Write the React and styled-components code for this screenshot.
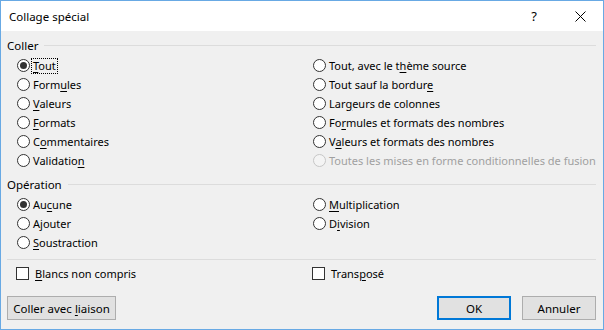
import React from 'react'
import styled, { createGlobalStyle } from 'styled-components'

const Global = createGlobalStyle`
  html, body { margin: 0; padding: 0; background: #f0f0f0; }
  * { box-sizing: border-box; }
`

const Window = styled.div`
  width: 604px;
  height: 330px;
  border: 1px solid #68a9e4;
  background: #f0f0f0;
  font-family: "Noto Sans", "Segoe UI", sans-serif;
  font-size: 11px;
  color: #000;
  display: flex;
  flex-direction: column;
`

const TitleBar = styled.div`
  height: 30px;
  background: #fff;
  display: flex;
  align-items: center;
  padding-left: 8px;
  flex-shrink: 0;
`

const Title = styled.div`
  flex: 1;
  font-size: 11.5px;
`

const TitleButton = styled.div`
  width: 46px;
  height: 30px;
  display: flex;
  align-items: center;
  justify-content: center;
  font-size: 13px;
  color: #000;
`

const Body = styled.div`
  flex: 1;
  padding: 6px 7px 0 6px;
  display: flex;
  flex-direction: column;
`

const SectionHeader = styled.div`
  height: 16px;
  display: flex;
  align-items: center;
  gap: 6px;
  margin-bottom: 3px;
  font-size: 11.5px;
  &::after {
    content: '';
    flex: 1;
    height: 1px;
    background: #dcdcdc;
  }
`

const Grid = styled.div`
  display: grid;
  grid-template-columns: 296px 1fr;
  grid-auto-flow: column;
  grid-template-rows: repeat(${p => p.$rows}, 19px);
  padding-left: 10px;
  margin-bottom: ${p => p.$mb || 0}px;
`

const Option = styled.label`
  display: flex;
  align-items: center;
  gap: 2px;
  color: ${p => (p.$disabled ? '#a0a0a0' : '#000')};
  white-space: nowrap;
`

const RadioCircle = styled.span`
  width: 13px;
  height: 13px;
  border-radius: 50%;
  border: 1px solid ${p => (p.$disabled ? '#c6c6c6' : '#333')};
  background: ${p => (p.$disabled ? '#f4f4f4' : '#fff')};
  display: flex;
  align-items: center;
  justify-content: center;
  flex-shrink: 0;
  &::after {
    content: '';
    display: ${p => (p.$checked ? 'block' : 'none')};
    width: 7px;
    height: 7px;
    border-radius: 50%;
    background: #333;
  }
`

const Box = styled.span`
  width: 13px;
  height: 13px;
  border: 1px solid #333;
  background: #fff;
  flex-shrink: 0;
  margin-left: -1px;
  margin-right: 3px;
`

const Text = styled.span`
  padding: 0 1px;
  line-height: 14px;
  outline: ${p => (p.$focus ? '1px dotted #000' : 'none')};
`

const Key = styled.u`
  text-decoration-thickness: 1px;
  text-underline-offset: 2px;
`

const Separator = styled.div`
  height: 1px;
  background: #dcdcdc;
  margin: 7px 0 4px 0;
`

const Footer = styled.div`
  display: flex;
  align-items: center;
  margin-top: 13px;
  gap: 11px;
`

const Spacer = styled.div`
  flex: 1;
`

const Button = styled.button`
  height: 24px;
  width: ${p => p.$w || 74}px;
  padding: 0;
  font-family: inherit;
  font-size: 11.5px;
  color: #000;
  background: #e1e1e1;
  border: ${p => (p.$default ? '2px solid #0078d7' : '1px solid #adadad')};
`

function L({ text, k }) {
  const i = text.indexOf(k)
  if (i < 0) return text
  return (
    <>
      {text.slice(0, i)}
      <Key>{k}</Key>
      {text.slice(i + k.length)}
    </>
  )
}

function Radio({ text, k, checked, disabled, focus }) {
  return (
    <Option $disabled={disabled}>
      <RadioCircle $checked={checked} $disabled={disabled} />
      <Text $focus={focus}>{k ? <L text={text} k={k} /> : text}</Text>
    </Option>
  )
}

function Check({ text, k }) {
  return (
    <Option>
      <Box />
      <Text><L text={text} k={k} /></Text>
    </Option>
  )
}

const coller = [
  { text: 'Tout', k: 'T', checked: true, focus: true },
  { text: 'Formules', k: 'u' },
  { text: 'Valeurs', k: 'V' },
  { text: 'Formats', k: 'F' },
  { text: 'Commentaires', k: 'o' },
  { text: 'Validation', k: 'n' },
  { text: 'Tout, avec le thème source', k: 'h' },
  { text: 'Tout sauf la bordure', k: 'e' },
  { text: 'Largeurs de colonnes', k: 'g' },
  { text: 'Formules et formats des nombres', k: 'r' },
  { text: 'Valeurs et formats des nombres', k: 'a' },
  { text: 'Toutes les mises en forme conditionnelles de fusion', disabled: true },
]

const operation = [
  { text: 'Aucune', k: 'c', checked: true },
  { text: 'Ajouter', k: 'j' },
  { text: 'Soustraction', k: 'S' },
  { text: 'Multiplication', k: 'M' },
  { text: 'Division', k: 'i' },
]

export default function App() {
  return (
    <>
      <Global />
      <Window>
        <TitleBar>
          <Title>Collage spécial</Title>
          <TitleButton>?</TitleButton>
          <TitleButton>
            <svg width="11" height="11" viewBox="0 0 11 11">
              <path d="M0.5 0.5 L10.5 10.5 M10.5 0.5 L0.5 10.5" stroke="#000" strokeWidth="1" />
            </svg>
          </TitleButton>
        </TitleBar>
        <Body>
          <SectionHeader>Coller</SectionHeader>
          <Grid $rows={6} $mb={6}>
            {coller.map(o => <Radio key={o.text} {...o} />)}
          </Grid>
          <SectionHeader>Opération</SectionHeader>
          <Grid $rows={3}>
            {operation.map(o => <Radio key={o.text} {...o} />)}
          </Grid>
          <Separator />
          <Grid $rows={1}>
            <Check text="Blancs non compris" k="B" />
            <Check text="Transposé" k="p" />
          </Grid>
          <Footer>
            <Button $w={109}>Coller avec <L text="liaison" k="l" /></Button>
            <Spacer />
            <Button $default>OK</Button>
            <Button>Annuler</Button>
          </Footer>
        </Body>
      </Window>
    </>
  )
}
